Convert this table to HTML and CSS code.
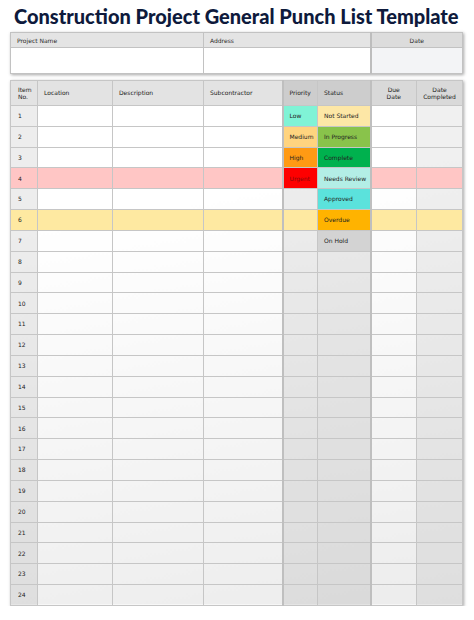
FILE: index.html
```html
<!DOCTYPE html>
<html>
<head>
<meta charset="utf-8">
<link rel="stylesheet" href="styles.css">
</head>
<body>
<div class="page">
  <h1 class="title">Construction Project General Punch List Template</h1>
  <table class="proj">
    <colgroup><col class="pc1"><col class="pc2"><col class="pc3"></colgroup>
    <tr class="phead"><th>Project Name</th><th>Address</th><th class="pdate">Date</th></tr>
    <tr class="pbody"><td></td><td></td><td class="pdate"></td></tr>
  </table>
  <table class="list">
    <colgroup>
      <col class="c-no"><col class="c-loc"><col class="c-desc"><col class="c-sub">
      <col class="c-pri"><col class="c-stat"><col class="c-due"><col class="c-done">
    </colgroup>
    <thead>
      <tr>
        <th class="no">Item<br>No.</th><th>Location</th><th>Description</th><th>Subcontractor</th>
        <th class="pri">Priority</th><th class="stat">Status</th><th class="due ctr">Due<br>Date</th><th class="done ctr">Date<br>Completed</th>
      </tr>
    </thead>
    <tbody>
      <tr><td class="no">1</td><td></td><td></td><td></td><td class="pri low">Low</td><td class="stat ns">Not Started</td><td class="due"></td><td class="done"></td></tr>
      <tr><td class="no">2</td><td></td><td></td><td></td><td class="pri med">Medium</td><td class="stat ip">In Progress</td><td class="due"></td><td class="done"></td></tr>
      <tr><td class="no">3</td><td></td><td></td><td></td><td class="pri high">High</td><td class="stat cp">Complete</td><td class="due"></td><td class="done"></td></tr>
      <tr class="pink"><td class="no">4</td><td></td><td></td><td></td><td class="pri urg">Urgent</td><td class="stat nr">Needs Review</td><td class="due"></td><td class="done"></td></tr>
      <tr><td class="no">5</td><td></td><td></td><td></td><td class="pri"></td><td class="stat ap">Approved</td><td class="due"></td><td class="done"></td></tr>
      <tr class="yellow"><td class="no">6</td><td></td><td></td><td></td><td class="pri"></td><td class="stat od">Overdue</td><td class="due"></td><td class="done"></td></tr>
      <tr><td class="no">7</td><td></td><td></td><td></td><td class="pri"></td><td class="stat oh">On Hold</td><td class="due"></td><td class="done"></td></tr>
      <tr><td class="no">8</td><td></td><td></td><td></td><td class="pri"></td><td class="stat"></td><td class="due"></td><td class="done"></td></tr>
      <tr><td class="no">9</td><td></td><td></td><td></td><td class="pri"></td><td class="stat"></td><td class="due"></td><td class="done"></td></tr>
      <tr><td class="no">10</td><td></td><td></td><td></td><td class="pri"></td><td class="stat"></td><td class="due"></td><td class="done"></td></tr>
      <tr><td class="no">11</td><td></td><td></td><td></td><td class="pri"></td><td class="stat"></td><td class="due"></td><td class="done"></td></tr>
      <tr><td class="no">12</td><td></td><td></td><td></td><td class="pri"></td><td class="stat"></td><td class="due"></td><td class="done"></td></tr>
      <tr><td class="no">13</td><td></td><td></td><td></td><td class="pri"></td><td class="stat"></td><td class="due"></td><td class="done"></td></tr>
      <tr><td class="no">14</td><td></td><td></td><td></td><td class="pri"></td><td class="stat"></td><td class="due"></td><td class="done"></td></tr>
      <tr><td class="no">15</td><td></td><td></td><td></td><td class="pri"></td><td class="stat"></td><td class="due"></td><td class="done"></td></tr>
      <tr><td class="no">16</td><td></td><td></td><td></td><td class="pri"></td><td class="stat"></td><td class="due"></td><td class="done"></td></tr>
      <tr><td class="no">17</td><td></td><td></td><td></td><td class="pri"></td><td class="stat"></td><td class="due"></td><td class="done"></td></tr>
      <tr><td class="no">18</td><td></td><td></td><td></td><td class="pri"></td><td class="stat"></td><td class="due"></td><td class="done"></td></tr>
      <tr><td class="no">19</td><td></td><td></td><td></td><td class="pri"></td><td class="stat"></td><td class="due"></td><td class="done"></td></tr>
      <tr><td class="no">20</td><td></td><td></td><td></td><td class="pri"></td><td class="stat"></td><td class="due"></td><td class="done"></td></tr>
      <tr><td class="no">21</td><td></td><td></td><td></td><td class="pri"></td><td class="stat"></td><td class="due"></td><td class="done"></td></tr>
      <tr><td class="no">22</td><td></td><td></td><td></td><td class="pri"></td><td class="stat"></td><td class="due"></td><td class="done"></td></tr>
      <tr><td class="no">23</td><td></td><td></td><td></td><td class="pri"></td><td class="stat"></td><td class="due"></td><td class="done"></td></tr>
      <tr><td class="no">24</td><td></td><td></td><td></td><td class="pri"></td><td class="stat"></td><td class="due"></td><td class="done"></td></tr>
    </tbody>
  </table>
</div>
</body>
</html>
```
FILE: styles.css
```css
html, body {
  margin: 0;
  padding: 0;
  background: #ffffff;
}
.page {
  width: 474px;
  padding: 0 12px 0 10px;
  box-sizing: border-box;
  font-family: "DejaVu Sans", sans-serif;
  color: #222222;
}
.title {
  margin: 0;
  padding: 6px 0 0 4px;
  height: 26px;
  box-sizing: border-box;
  font-family: Lato, "DejaVu Sans", sans-serif;
  font-weight: 900;
  font-size: 20px;
  line-height: 20px;
  color: #0e1a3c;
  white-space: nowrap;
}
table {
  border-collapse: collapse;
  table-layout: fixed;
  width: 452px;
  box-shadow: 1px 1px 3px rgba(0, 0, 0, 0.35);
}
.proj {
  margin-top: 6px;
  border: 1px solid #a9a9a9;
}
.pc1 { width: 193px; }
.pc2 { width: 167px; }
.pc3 { width: 92px; }
.proj th, .proj td {
  border: 1px solid #c2c2c2;
  padding: 0 0 0 6px;
  font-size: 6px;
  font-weight: normal;
  text-align: left;
  color: #2b2b2b;
}
.phead { height: 15px; }
.phead th { background: #e4e4e4; }
.pbody { height: 26px; }
.proj .pdate {
  text-align: center;
  padding: 0;
  border-left: 2px solid #bdbdbd;
}
.phead .pdate { background: #dcdcdc; }
.pbody .pdate { background: #f3f4f6; }

.list {
  margin-top: 6px;
  border: 1px solid #a4a4a4;
  background: linear-gradient(170deg, #ffffff 0%, #ffffff 25%, #ececec 100%);
}
.c-no { width: 27px; }
.c-loc { width: 75px; }
.c-desc { width: 91px; }
.c-sub { width: 79px; }
.c-pri { width: 35px; }
.c-stat { width: 53px; }
.c-due { width: 46px; }
.c-done { width: 46px; }
.list th, .list td {
  border: 1px solid #c6c6c6;
  padding: 0 0 0 6px;
  font-size: 6px;
  font-weight: normal;
  text-align: left;
  color: #222222;
  line-height: 7.5px;
  white-space: nowrap;
  overflow: hidden;
}
.list thead tr { height: 25px; }
.list tbody tr { height: 20.83px; }
.list th { background: #e3e3e3; }
.list th.pri, .list th.stat { background: #cdcdcd; }
.list th.due, .list th.done { background: #d9d9d9; }
.list th.ctr { text-align: center; padding: 0; }
.list .no { padding-left: 7px; }
.list td.no { background: rgba(0, 0, 0, 0.07); }
.list td.pri { background: rgba(0, 0, 0, 0.07); }
.list td.stat { background: rgba(0, 0, 0, 0.08); }
.list td.done { background: rgba(0, 0, 0, 0.06); }
.list .pri { border-left: 2px solid #bfbfbf; }
.list .due { border-left: 2px solid #bfbfbf; }
.list .stat { border-left: 1px solid #c0c0c0; }

.list tr.pink td { background: #ffc6c5; }
.list tr.yellow td { background: #fee9a1; }

.list td.pri.low { background: #80f3d6; }
.list td.pri.med { background: #ffd47f; }
.list td.pri.high { background: #ff9a14; }
.list td.pri.urg { background: #fe0000; color: #8a0a0a; }
.list td.stat.ns { background: #fde7a6; }
.list td.stat.ip { background: #89c34b; }
.list td.stat.cp { background: #00b14e; }
.list td.stat.nr { background: #b3eee6; }
.list td.stat.ap { background: #5be2dc; }
.list td.stat.od { background: #ffb300; }
.list td.stat.oh { background: #d3d3d3; }
```
